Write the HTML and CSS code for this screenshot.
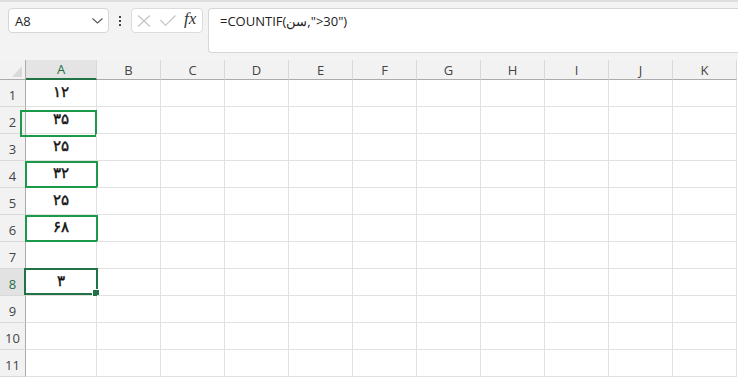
FILE: index.html
```html
<!DOCTYPE html>
<html lang="fa">
<head>
    <meta charset="UTF-8">
    <meta name="viewport" content="width=device-width, initial-scale=1.0">
    <title>COUNTIF</title>
    <link rel="stylesheet" href="styles.css">
</head>
<body>
    <!-- Formula bar -->
    <div class="toolbar">
        <div class="name-box">
            <span>A8</span>
            <svg class="chevron" width="11" height="6" viewBox="0 0 11 6"><path d="M0.5 0.5 L5.5 5 L10.5 0.5" fill="none" stroke="#555" stroke-width="1.1"/></svg>
        </div>
        <div class="dots"><i></i><i></i><i></i></div>
        <div class="func-box">
            <svg width="14" height="12" viewBox="0 0 14 12"><path d="M1 0.5 L13 11.5 M13 0.5 L1 11.5" stroke="#c2c2c2" stroke-width="1.1" fill="none"/></svg>
            <svg width="16" height="11" viewBox="0 0 16 11"><path d="M0.5 5 L5.5 10.3 L15.5 0.5" stroke="#c2c2c2" stroke-width="1.1" fill="none"/></svg>
            <span class="fx">fx</span>
        </div>
        <div class="formula">=COUNTIF(<bdi>سن</bdi>,"&gt;30")</div>
    </div>

    <!-- Sheet -->
    <div class="sheet">
        <div class="corner"><span class="tri"></span></div>
        <div class="col-head active">A</div>
        <div class="col-head">B</div>
        <div class="col-head">C</div>
        <div class="col-head">D</div>
        <div class="col-head">E</div>
        <div class="col-head">F</div>
        <div class="col-head">G</div>
        <div class="col-head">H</div>
        <div class="col-head">I</div>
        <div class="col-head">J</div>
        <div class="col-head">K</div>
    </div>

    <script>
        const values = ['۱۲', '۳۵', '۲۵', '۳۲', '۲۵', '۶۸', '', '۳', '', '', ''];
        const marks = { 2: 'hl hl-wide', 4: 'hl', 6: 'hl hl-flat', 8: 'sel' };
        const sheet = document.querySelector('.sheet');

        values.forEach(function (v, i) {
            const row = i + 1;
            const head = document.createElement('div');
            head.className = 'row-head' + (row === 8 ? ' active' : '');
            head.textContent = row;
            sheet.appendChild(head);

            for (let c = 0; c < 11; c++) {
                const cell = document.createElement('div');
                cell.className = 'cell';
                if (c === 0) {
                    cell.classList.add('num');
                    cell.textContent = v;
                    if (marks[row]) {
                        const box = document.createElement('span');
                        box.className = marks[row];
                        cell.appendChild(box);
                    }
                }
                sheet.appendChild(cell);
            }
        });
    </script>
</body>
</html>
```

FILE: styles.css
```css
* {
    box-sizing: border-box;
    margin: 0;
    padding: 0;
}

body {
    font-family: 'Open Sans', 'Noto Sans', sans-serif;
    background: #fff;
    overflow: hidden;
    width: 738px;
}

/* Formula bar */
.toolbar {
    height: 60px;
    background: #f3f3f3;
    border-top: 2px solid #dedede;
    display: flex;
    align-items: flex-start;
    padding: 6px 0 0 8px;
}

.name-box {
    width: 101px;
    height: 25px;
    background: #fff;
    border: 1px solid #d6d6d6;
    border-radius: 4px;
    display: flex;
    align-items: center;
    justify-content: space-between;
    padding: 0 5px 0 6px;
    font-size: 13px;
    color: #222;
}

.chevron {
    margin-top: 1px;
}

.dots {
    width: 22px;
    height: 25px;
    display: flex;
    flex-direction: column;
    align-items: center;
    justify-content: center;
    gap: 2px;
}

.dots i {
    width: 2px;
    height: 2px;
    background: #444;
}

.func-box {
    width: 72px;
    height: 25px;
    background: #fff;
    border: 1px solid #dcdcdc;
    border-radius: 4px;
    display: flex;
    align-items: center;
    gap: 9px;
    padding-left: 5px;
}

.fx {
    font-family: 'Liberation Serif', serif;
    font-style: italic;
    font-size: 17px;
    color: #333;
    margin-left: -1px;
    margin-top: -3px;
}

.formula {
    flex: 1;
    height: 45px;
    margin-left: 5px;
    background: #fff;
    border: 1px solid #d6d6d6;
    border-right: none;
    border-radius: 4px 0 0 4px;
    padding: 3px 0 0 11px;
    font-size: 13px;
    color: #222;
}

/* Sheet */
.sheet {
    display: grid;
    grid-template-columns: 26px 71px repeat(10, 64px);
    grid-template-rows: 20px;
    grid-auto-rows: 27px;
}

.corner {
    background: #f2f2f2;
    border-right: 1px solid #ababab;
    border-bottom: 1px solid #ababab;
    position: relative;
}

.tri {
    position: absolute;
    right: 3px;
    bottom: 2px;
    width: 0;
    height: 0;
    border-left: 10px solid transparent;
    border-bottom: 11px solid #dadada;
}

.col-head {
    background: #f2f2f2;
    border-right: 1px solid #d9d9d9;
    border-bottom: 1px solid #ababab;
    display: flex;
    align-items: center;
    justify-content: center;
    font-size: 13px;
    color: #444;
}

.col-head.active {
    background: #e4e4e4;
    color: #1e6e45;
    border-bottom: 2px solid #217346;
}

.row-head {
    background: #f2f2f2;
    border-right: 1px solid #ababab;
    border-bottom: 1px solid #dadada;
    display: flex;
    align-items: flex-end;
    justify-content: center;
    padding-bottom: 2px;
    font-size: 13px;
    color: #444;
}

.row-head.active {
    background: #e2e2e2;
    color: #1e6e45;
}

.cell {
    border-right: 1px solid #e1e1e1;
    border-bottom: 1px solid #e1e1e1;
    position: relative;
}

.num {
    display: flex;
    align-items: center;
    justify-content: center;
    font-family: 'DejaVu Sans', sans-serif;
    font-size: 15px;
    -webkit-text-stroke: 0.4px #111;
    color: #111;
    padding-bottom: 2px;
}

/* Highlight boxes */
.hl {
    position: absolute;
    top: 0;
    left: -1px;
    right: -2px;
    bottom: -1px;
    border: 2px solid #1a9a48;
}

.hl-wide {
    top: 3px;
    left: -6px;
    right: -1px;
    bottom: -4px;
}

.hl-flat {
    bottom: -1px;
}

.sel {
    position: absolute;
    top: -1px;
    left: -2px;
    right: -2px;
    bottom: 0;
    border: 2px solid #217346;
}

.sel::after {
    content: '';
    position: absolute;
    right: -4px;
    bottom: -4px;
    width: 6px;
    height: 6px;
    background: #217346;
    border: 1px solid #fff;
}
```
